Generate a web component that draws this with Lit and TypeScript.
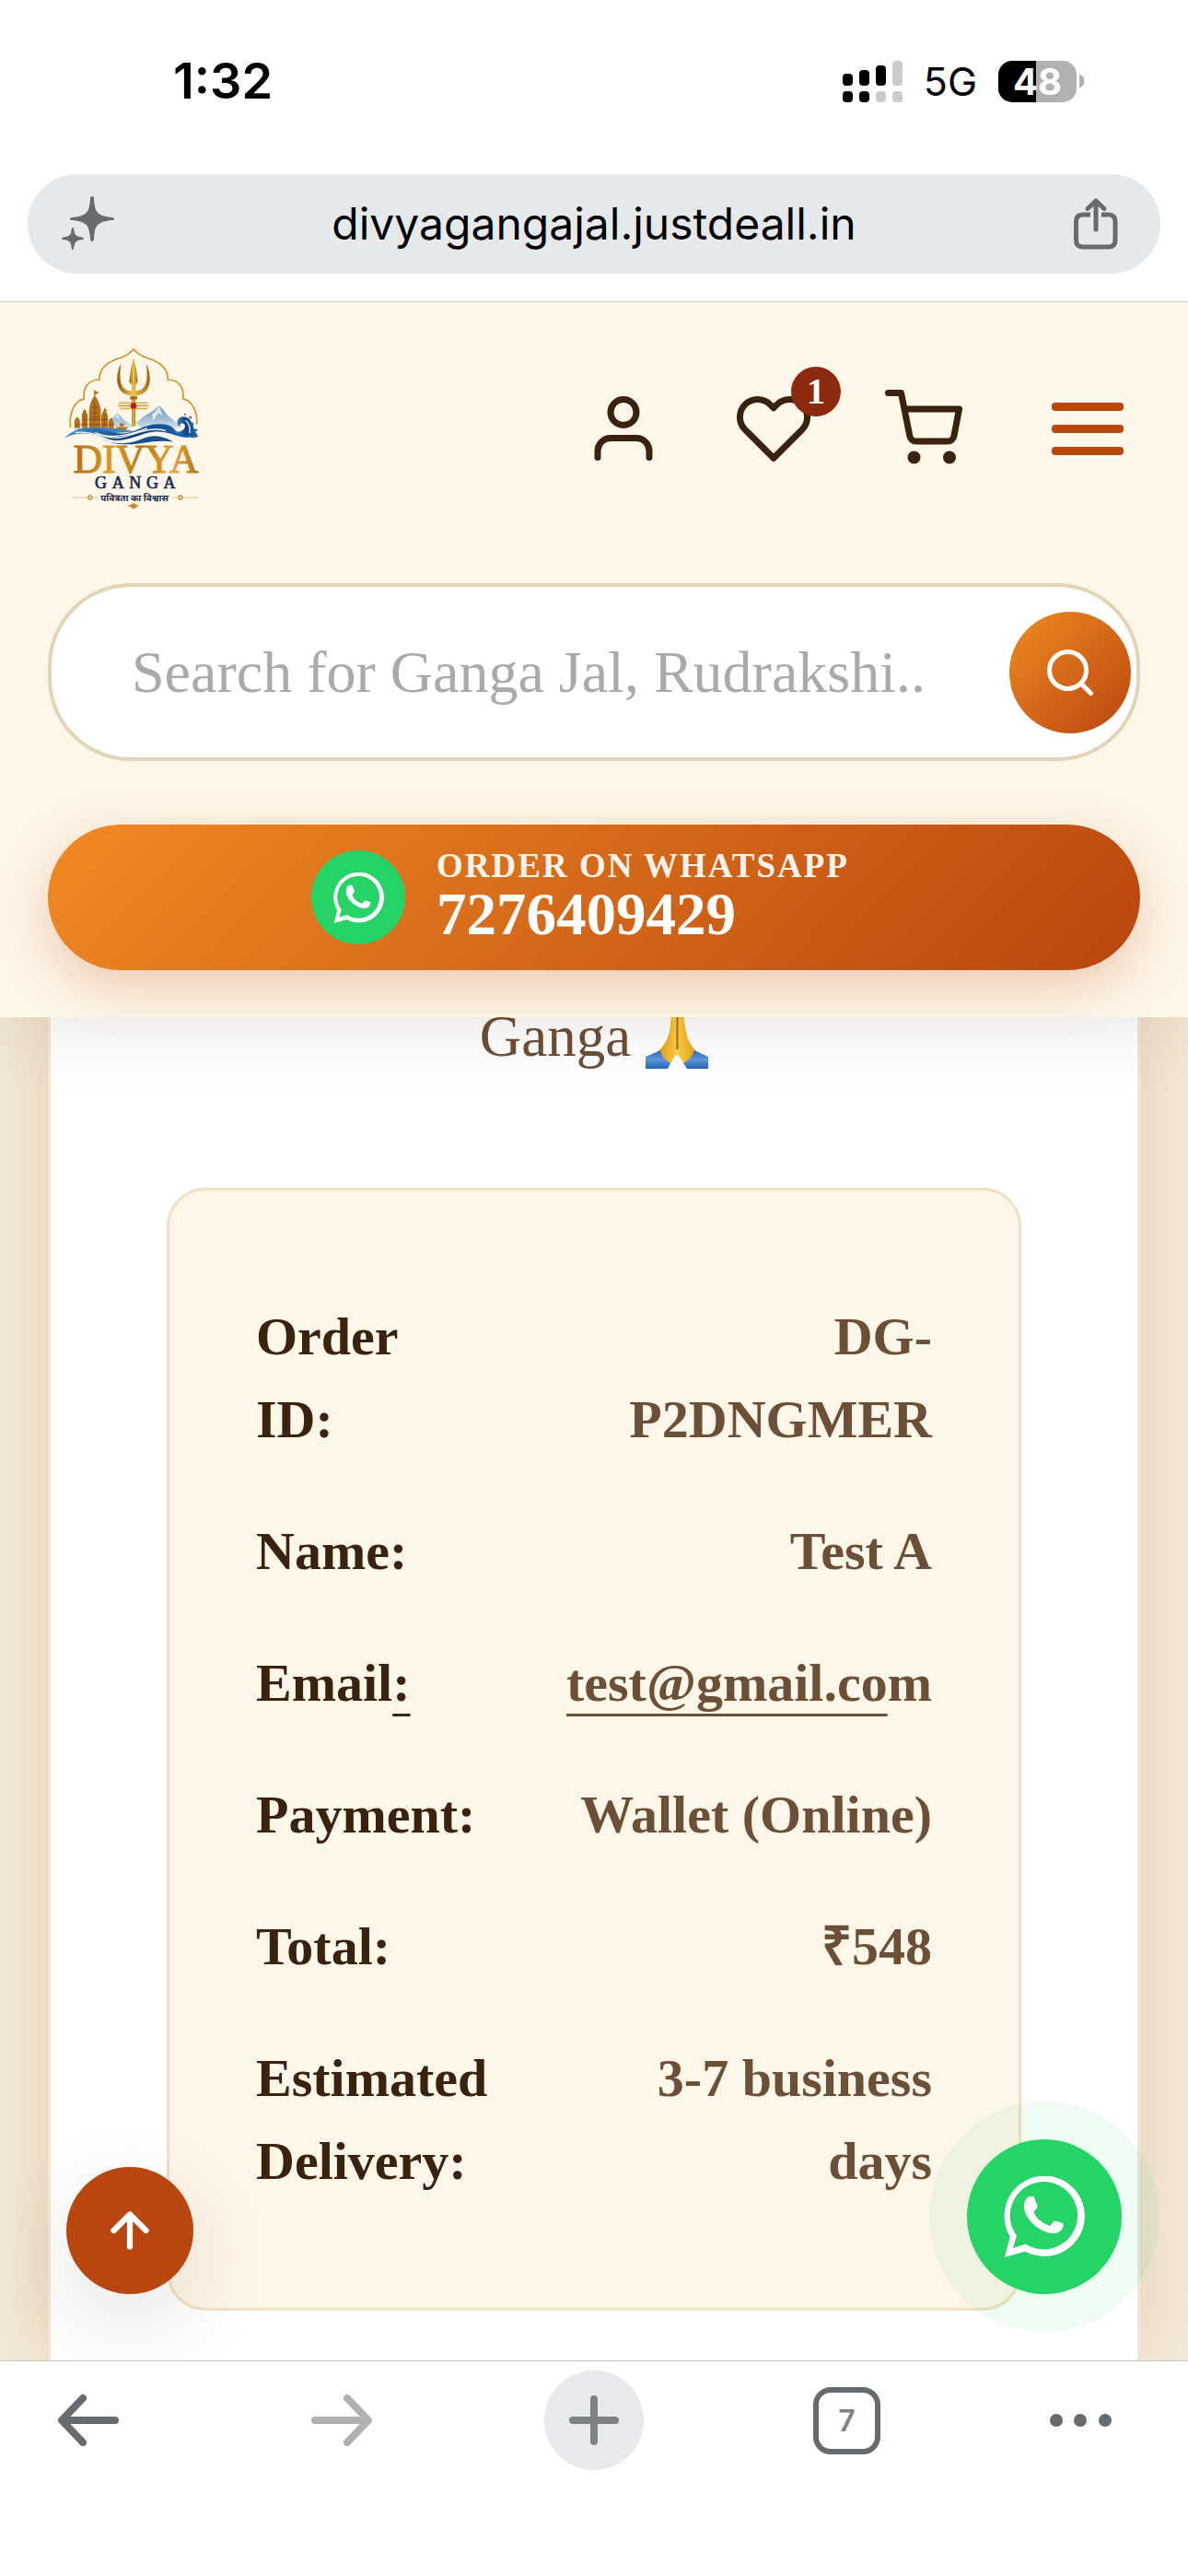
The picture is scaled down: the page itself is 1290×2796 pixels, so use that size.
import { LitElement, html, css, svg, nothing } from "lit";
import { customElement, property } from "lit/decorators.js";

const whatsappGlyph = svg`
  <path fill="#fff" fill-rule="evenodd" d="M20 197A131 131 0 1 1 70 245L3 264ZM42 194L30 234L71 221A110 110 0 1 0 42 194Z"/>
  <path fill="#fff" d="M66 98C66 82 73 66 86 66L95 66Q98 67 99 70L109 95Q110 99 109 102L98 116Q104 144 150 162L163 147Q166 144 171 146L191 153Q194 155 194 158C193 176 178 186 162 186C120 186 66 140 66 98Z"/>`;

@customElement("phone-status")
class PhoneStatus extends LitElement {
  static styles = css`
    :host { display: flex; align-items: center; gap: 23px; padding: 56px 113px 0 188px; height: 64px; color: #000; font-family: Inter, "Liberation Sans", sans-serif; }
    .time { margin-right: auto; font-size: 54px; line-height: 64px; font-weight: 600; }
    .network { font-size: 43px; line-height: 64px; }
    .signal { display: block; width: 65px; height: 45px; }
    .battery { display: flex; align-items: center; gap: 3px; }
    .cell { display: flex; align-items: center; justify-content: center; width: 85px; height: 45px; border-radius: 15px; background: linear-gradient(90deg, #000 48%, #b1b1b1 48%); color: #fff; font-size: 40px; line-height: 45px; font-weight: 700; }
    .nub { width: 5px; height: 14px; border-radius: 0 7px 7px 0; background: #b1b1b1; }
  `;
  render() {
    return html`
      <span class="time">1:32</span>
      <svg class="signal" viewBox="0 0 65 45" aria-hidden="true">
        <g fill="#000">
          <rect y="14" width="11" height="13" rx="4"/><rect x="18" y="10" width="11" height="17" rx="4"/><rect x="36" y="5" width="11" height="22" rx="4"/>
          <rect y="33" width="11" height="12" rx="4"/><rect x="18" y="33" width="11" height="12" rx="4"/>
        </g>
        <g fill="#cbcbcb">
          <rect x="54" width="11" height="27" rx="4"/><rect x="36" y="33" width="11" height="12" rx="4"/><rect x="54" y="33" width="11" height="12" rx="4"/>
        </g>
      </svg>
      <span class="network">5G</span>
      <span class="battery"><span class="cell">48</span><span class="nub"></span></span>
    `;
  }
}

@customElement("address-bar")
class AddressBar extends LitElement {
  static styles = css`
    :host { display: block; position: relative; z-index: 3; padding: 69px 30px 30px; border-bottom: 1px solid #cbc6cb; background: #fff; }
    .bar { display: flex; align-items: center; justify-content: space-between; height: 108px; padding: 0 32px; border-radius: 54px; background: #e6e9ec; }
    .tool { display: flex; align-items: center; justify-content: center; width: 68px; height: 68px; padding: 0; border: 0; background: none; }
    .tool svg { display: block; width: 68px; height: 68px; }
    .url { font-family: Inter, "Liberation Sans", sans-serif; font-size: 48px; line-height: 60px; color: #000; text-decoration: none; }
  `;
  render() {
    return html`
      <div class="bar">
        <button class="tool" aria-label="Assistant">
          <svg viewBox="0 0 68 68" fill="#666b6f">
            <path d="M38 4Q40 4 40 7C41 21 43 25 59 27Q62 27 62 28.500Q62 30 59 30C43 32 41 36 40 50Q40 53 38 53Q36 53 36 50C35 36 33 32 17 30Q14 30 14 28.500Q14 27 17 27C33 25 35 21 36 7Q36 4 38 4Z"/>
            <path d="M17 38Q18 38 18.300 40C19 46 20 47.500 27 48.500Q29 49 29 50Q29 51 27 51.200C20 52 19 54 18.300 60Q18 62 17 62Q16 62 15.700 60C15 54 14 52 7 51.200Q5 51 5 50Q5 49 7 48.500C14 47.500 15 46 15.700 40Q16 38 17 38Z"/>
          </svg>
        </button>
        <a class="url" href="https://divyagangajal.justdeall.in">divyagangajal.justdeall.in</a>
        <button class="tool" aria-label="Share">
          <svg viewBox="4 0 68 68" fill="none" stroke="#666b6f" stroke-width="5">
            <path d="M28 24H20Q12.500 24 12.500 31.500V51.500Q12.500 59 20 59H47.500Q55 59 55 51.500V31.500Q55 24 47.500 24H40"/>
            <path d="M34 40V9M25 17.500L34 9L43 17.500" stroke-linecap="round" stroke-linejoin="round"/>
          </svg>
        </button>
      </div>
    `;
  }
}

@customElement("brand-logo")
class BrandLogo extends LitElement {
  static styles = css`
    :host { display: block; }
    svg { display: block; width: 150px; height: 178px; }
    .name { font-family: "Liberation Serif", serif; font-size: 131px; }
    .sub { font-family: "Liberation Serif", serif; font-size: 54px; letter-spacing: 17px; }
    .tag { font-family: "Noto Sans Devanagari", "Noto Sans", sans-serif; font-size: 30px; font-weight: 700; }
  `;
  render() {
    return html`
      <svg viewBox="60 45 450 535" role="img" aria-label="Divya Ganga">
        <defs>
          <linearGradient id="gold" x1="0" x2="1"><stop offset="0" stop-color="#b06f12"/><stop offset=".3" stop-color="#d99a2b"/><stop offset=".55" stop-color="#b9780f"/><stop offset=".8" stop-color="#dfa63a"/><stop offset="1" stop-color="#b5740f"/></linearGradient>
          <linearGradient id="metal" x1="0" x2="1"><stop offset="0" stop-color="#8d5c0a"/><stop offset=".5" stop-color="#f1c450"/><stop offset="1" stop-color="#9a660d"/></linearGradient>
          <linearGradient id="peak" x1="0" y1="0" x2="0" y2="1"><stop offset="0" stop-color="#5a8fc0"/><stop offset="1" stop-color="#dfe9ee"/></linearGradient>
          <linearGradient id="water" x1="0" x2="1"><stop offset="0" stop-color="#4596cf"/><stop offset=".5" stop-color="#0d3f80"/><stop offset="1" stop-color="#1d6fb4"/></linearGradient>
        </defs>
        <path d="M79 310C74 262 92 222 124 216C118 180 138 153 173 154C172 112 205 94 243 82Q270 72 285 54Q300 72 327 82C366 94 398 112 397 154C432 153 452 180 446 216C478 222 495 262 491 300" fill="none" stroke="#cf9428" stroke-width="5"/>
        <path d="M190 308L215 280L232 262L250 280L285 308ZM290 296L325 268L345 258L370 238L395 268L420 290L440 308L330 320Z" fill="url(#peak)"/>
        <path d="M232 262L240 284L228 276L218 288ZM370 238L380 272L366 262L350 286L345 268Z" fill="#fff" opacity=".7"/>
        <g fill="#b0721f">
          <path d="M140 312V250Q145 220 158 205Q172 220 178 250V312Z"/>
          <path d="M116 312V268Q120 255 125 249Q132 256 135 270V312ZM180 312V270Q185 256 191 249Q198 258 201 272V312ZM92 312V288Q97 278 102 275Q108 280 110 290V312ZM203 312V290Q208 280 213 277Q219 284 221 296V312Z"/>
          <path d="M156 188H160V212H156ZM160 190L173 196L160 202ZM189 246H192V260H189ZM192 248L200 253L192 256Z"/>
        </g>
        <path d="M96 300H218M120 284H204M146 262H172M148 244H168M145 276H174M125 262V300M158 220V290M190 266V300" stroke="#6f4010" stroke-width="3" fill="none" opacity=".6"/>
        <path d="M226 308H268L260 318H234ZM240 296H254V306H240Z" fill="#b0721f"/>
        <path d="M92 316Q150 306 200 310T290 322L200 330Z" fill="#3f84ba"/>
        <path d="M280 205H291V305H280Z" fill="url(#metal)"/>
        <path d="M285 80Q296 118 299 160L291 172V204H280V172L271 160Q275 118 285 80Z" fill="url(#metal)"/>
        <path d="M244 100C224 140 222 206 285 206C348 206 346 140 326 100C332 150 330 186 297 190H273C240 186 238 150 244 100Z" fill="url(#metal)"/>
        <path d="M274 208H297V218H274Z" fill="#a66f12"/>
        <path d="M238 228H332V230H238ZM236 237H334V240H236ZM242 247H330V249H242Z" fill="#d79f30" stroke="#d79f30" stroke-width="2"/>
        <circle cx="285" cy="239" r="10" fill="#c01818"/>
        <path d="M60 344C100 300 160 310 220 326S310 296 370 298S410 326 440 326Q470 320 497 338Q488 346 470 342C430 346 400 318 350 324S250 366 200 346S100 322 60 344Z" fill="url(#water)"/>
        <path d="M95 326C150 318 190 348 240 342S330 304 390 320M160 326C220 352 280 330 330 312" fill="none" stroke="#eaf4f8" stroke-width="4"/>
        <path d="M170 338C210 368 270 366 310 348S380 336 414 356C380 352 350 354 318 360S210 372 170 338Z" fill="#14508f"/>
        <path d="M420 322C450 330 462 300 446 296C438 294 434 302 438 307C424 304 424 278 442 275C470 270 478 300 484 318L494 336L440 334Z" fill="url(#water)"/>
        <path d="M455 286Q472 300 468 328" stroke="#eaf4f8" stroke-width="4" fill="none"/>
        <circle cx="453" cy="267" r="3" fill="#1d6fb4"/><circle cx="471" cy="277" r="4" fill="#1d6fb4"/><ellipse cx="477" cy="299" rx="4" ry="7" fill="#1d6fb4"/><ellipse cx="488" cy="318" rx="6" ry="4" fill="#1d6fb4"/>
        <text class="name" x="293" y="456" text-anchor="middle" fill="url(#gold)" stroke="url(#gold)" stroke-width="3">DIVYA</text>
        <text class="sub" x="299" y="508" text-anchor="middle" fill="#17284f" stroke="#17284f" stroke-width="2">GANGA</text>
        <text class="tag" x="288" y="549" text-anchor="middle" fill="#17284f">पवित्रता का विश्वास</text>
        <path d="M84 538H134M152 538H168M408 538H430M446 538H498" stroke="#d9a860" stroke-width="2"/>
        <circle cx="143" cy="538" r="6" fill="none" stroke="#c8892f" stroke-width="4"/><circle cx="438" cy="538" r="6" fill="none" stroke="#c8892f" stroke-width="4"/>
        <path d="M266 564Q276 562 285 556Q294 562 302 564Q294 568 285 576Q276 568 266 564Z" fill="#c8892f"/>
      </svg>
    `;
  }
}

@customElement("shop-header")
class ShopHeader extends LitElement {
  static styles = css`
    :host { display: flex; flex-direction: column; position: relative; z-index: 2; padding: 48px 52px 51px; background: #fef6e9; box-shadow: 0 12px 72px rgba(60, 36, 16, 0.1); }
    .top { display: flex; align-items: center; gap: 79px; margin-bottom: 79px; }
    .brand { margin-right: auto; padding: 0 18px; }
    .icon { display: flex; position: relative; padding: 0; border: 0; background: none; }
    .icon svg { display: block; width: 84px; height: 84px; }
    .badge { position: absolute; top: -25px; right: -31px; width: 54px; height: 54px; border-radius: 50%; background: #8b2a0e; color: #fff; font: 700 40px/54px "Liberation Serif", serif; text-align: center; }
    .menu { display: flex; flex-direction: column; gap: 15px; padding: 18px; border: 0; background: none; }
    .line { width: 78px; height: 9px; border-radius: 4px; background: #b8460e; }
    .search { display: flex; align-items: center; box-sizing: border-box; height: 193px; margin-bottom: 69px; padding-right: 6px; border: 4px solid #e3d3b7; border-radius: 90px; background: #fff; }
    .field { flex: 1; min-width: 0; box-sizing: border-box; height: 120px; margin: 0 95px 0 87px; padding: 0; border: 0; outline: 0; background: none; color: #3a2210; font: 64px/76px "Liberation Serif", serif; }
    .field::placeholder { color: #aaa; opacity: 1; }
    .go { display: flex; align-items: center; justify-content: center; width: 132px; height: 132px; padding: 0; border: 0; border-radius: 50%; background: linear-gradient(135deg, #f08a24, #b8460e); }
    .go svg { display: block; width: 60px; height: 60px; }
    .order { display: flex; align-items: center; justify-content: center; gap: 34px; padding: 27px 30px 27px 0; border-radius: 79px; background: linear-gradient(135deg, #f08a24, #b8460e); box-shadow: 0 18px 54px rgba(184, 70, 14, 0.25); color: #fff; text-decoration: none; }
    .disc { display: flex; align-items: center; justify-content: center; width: 102px; height: 102px; border-radius: 50%; background: #25d366; }
    .disc svg { display: block; width: 55px; height: 55px; }
    .words { display: flex; flex-direction: column; font-weight: 700; }
    .label { font-size: 37px; line-height: 36px; letter-spacing: 2px; color: #fff4ec; }
    .number { font-size: 65px; line-height: 68px; }
  `;
  render() {
    return html`
      <div class="top">
        <a class="brand" href="#"><brand-logo></brand-logo></a>
        <button class="icon" aria-label="Account">
          <svg viewBox="0 0 24 24" fill="none" stroke="#3a2210" stroke-width="2" stroke-linecap="round" stroke-linejoin="round"><path d="M20 21v-2a4 4 0 0 0-4-4H8a4 4 0 0 0-4 4v2"/><circle cx="12" cy="7" r="4"/></svg>
        </button>
        <button class="icon" aria-label="Wishlist">
          <svg viewBox="0 0 24 24" fill="none" stroke="#3a2210" stroke-width="2" stroke-linecap="round" stroke-linejoin="round"><path d="M20.840 4.610a5.500 5.500 0 0 0-7.780 0L12 5.670l-1.060-1.060a5.500 5.500 0 0 0-7.780 7.780l1.060 1.060L12 21.230l7.780-7.780 1.060-1.060a5.500 5.500 0 0 0 0-7.780z"/></svg>
          <span class="badge">1</span>
        </button>
        <button class="icon" aria-label="Cart">
          <svg viewBox="0 0 24 24" fill="none" stroke="#3a2210" stroke-width="2" stroke-linecap="round" stroke-linejoin="round"><circle cx="9" cy="21" r="1"/><circle cx="20" cy="21" r="1"/><path d="M1 1h4l2.680 13.390a2 2 0 0 0 2 1.610h9.720a2 2 0 0 0 2-1.610L23 6H6"/></svg>
        </button>
        <button class="menu" aria-label="Menu"><span class="line"></span><span class="line"></span><span class="line"></span></button>
      </div>
      <form class="search" role="search" @submit=${(e: Event) => e.preventDefault()}>
        <input class="field" type="text" aria-label="Search products" placeholder="Search for Ganga Jal, Rudrakshi..." />
        <button class="go" aria-label="Search">
          <svg viewBox="0 0 24 24" fill="none" stroke="#fff" stroke-width="2" stroke-linecap="round"><circle cx="11" cy="11" r="8"/><path d="M21 21l-4.350-4.350"/></svg>
        </button>
      </form>
      <a class="order" href="https://wa.me/7276409429">
        <span class="disc"><svg viewBox="0 0 264 264" aria-hidden="true">${whatsappGlyph}</svg></span>
        <span class="words"><span class="label">ORDER ON WHATSAPP</span><span class="number">7276409429</span></span>
      </a>
    `;
  }
}

interface OrderRow { label: string; value: string; linked?: number; }

@customElement("order-summary")
class OrderSummary extends LitElement {
  @property({ attribute: false }) rows: OrderRow[] = [];
  static styles = css`
    :host { display: block; }
    .box { display: flex; flex-direction: column; gap: 53px; margin: 0; padding: 114px 94px; border: 3px solid #f3e0c4; border-radius: 42px; background: #fef6e9; font: 700 58px/90px "Liberation Serif", serif; }
    .row { display: flex; justify-content: space-between; }
    .label { width: min-content; color: #3a2210; }
    .value { max-width: 55%; margin: 0; color: #6b4f36; text-align: right; }
    .mark { text-decoration: underline; text-decoration-thickness: 3px; text-underline-offset: 14px; text-decoration-skip-ink: none; }
  `;
  render() {
    return html`
      <dl class="box">
        ${this.rows.map((r) => {
          const n = r.linked ?? 0;
          return html`<div class="row">
            <dt class="label">${n ? html`${r.label}<span class="mark">:</span>` : `${r.label}:`}</dt>
            <dd class="value">${n ? html`<span class="mark">${r.value.slice(0, n)}</span>` : nothing}${r.value.slice(n)}</dd>
          </div>`;
        })}
      </dl>
    `;
  }
}

@customElement("browser-toolbar")
class BrowserToolbar extends LitElement {
  static styles = css`
    :host { display: flex; justify-content: space-between; position: relative; z-index: 2; padding: 10px 42px 115px; border-top: 1px solid #c4c5c6; background: #fff; }
    .key { display: flex; align-items: center; justify-content: center; width: 108px; height: 108px; padding: 0; border: 0; border-radius: 50%; background: none; }
    .key svg { display: block; width: 68px; height: 68px; }
    .add { background: #e8e9ed; }
    .more { justify-content: flex-start; }
    .count { box-sizing: border-box; width: 73px; height: 73px; border: 6px solid #666b6f; border-radius: 19px; color: #7d8285; font: 600 32px/61px Inter, "Liberation Sans", sans-serif; text-align: center; }
  `;
  render() {
    return html`
      <button class="key" aria-label="Back"><svg viewBox="0 0 68 68" fill="none" stroke="#666b6f" stroke-width="8" stroke-linecap="round" stroke-linejoin="round"><path d="M63 34H6M28 10L5 34L28 58"/></svg></button>
      <button class="key" aria-label="Forward"><svg viewBox="0 0 68 68" fill="none" stroke="#b1b1b1" stroke-width="8" stroke-linecap="round" stroke-linejoin="round"><path d="M5 34H62M40 10L63 34L40 58"/></svg></button>
      <button class="key add" aria-label="New tab"><svg viewBox="0 0 68 68" fill="none" stroke="#7d8285" stroke-width="8" stroke-linecap="round"><path d="M34 11V57M11 34H57"/></svg></button>
      <button class="key" aria-label="Tabs"><span class="count">7</span></button>
      <button class="key more" aria-label="More"><svg viewBox="0 0 68 68" fill="#666b6f"><circle cx="7" cy="34" r="7"/><circle cx="33" cy="34" r="7"/><circle cx="60" cy="34" r="7"/></svg></button>
    `;
  }
}

@customElement("app-root")
class AppRoot extends LitElement {
  static styles = css`
    :host { display: flex; flex-direction: column; min-height: 100vh; background: #fff; font-family: "Liberation Serif", serif; }
    .page { display: flex; flex: 1; flex-direction: column; position: relative; overflow: hidden; padding: 0 52px; background: #f5ecdb; }
    .card { flex: 1; margin-top: -31px; padding: 0 126px 53px; border: 3px solid #f3e6d3; border-width: 0 3px; background: #fff; box-shadow: 0 0 90px rgba(160, 80, 19, 0.2); }
    .thanks { display: flex; align-items: center; justify-content: center; gap: 16px; margin: 0 0 111px; color: #6b4f36; font-size: 63px; line-height: 105px; }
    .pray { display: block; width: 68px; height: 68px; }
    .float { display: flex; align-items: center; justify-content: center; position: absolute; bottom: 72px; padding: 0; border: 0; border-radius: 50%; }
    .up { left: 72px; width: 138px; height: 138px; background: #b8460e; box-shadow: 0 30px 90px rgba(60, 36, 16, 0.12); }
    .up svg { display: block; width: 60px; height: 60px; }
    .chat { right: 72px; width: 168px; height: 168px; background: #25d366; box-shadow: 0 0 0 41px rgba(37, 211, 102, 0.08); }
    .chat svg { display: block; width: 88px; height: 88px; }
  `;
  private rows: OrderRow[] = [
    { label: "Order ID", value: "DG-P2DNGMER" },
    { label: "Name", value: "Test A" },
    { label: "Email", value: "test@gmail.com", linked: 13 },
    { label: "Payment", value: "Wallet (Online)" },
    { label: "Total", value: "₹548" },
    { label: "Estimated Delivery", value: "3-7 business days" },
  ];
  render() {
    return html`
      <phone-status></phone-status>
      <address-bar></address-bar>
      <shop-header></shop-header>
      <main class="page">
        <section class="card">
          <p class="thanks">Ganga
            <svg class="pray" viewBox="0 0 68 68" role="img" aria-label="Folded hands">
              <defs>
                <linearGradient id="skin" x1="0" x2="1"><stop offset="0" stop-color="#e09a10"/><stop offset=".5" stop-color="#ffd04a"/><stop offset="1" stop-color="#e8a010"/></linearGradient>
                <linearGradient id="cuff" x1="0" y1="0" x2="0" y2="1"><stop offset="0" stop-color="#2b68b2"/><stop offset=".5" stop-color="#5a9ae2"/><stop offset="1" stop-color="#2a66ae"/></linearGradient>
              </defs>
              <path d="M34 0Q29 1 28 10L26 28Q22 42 14 49L26 64L32 54Q34 51 36 54L43 64L55 49Q47 42 44 28L41 10Q39 1 34 0Z" fill="url(#skin)"/>
              <path d="M34.500 2V47" stroke="#b06c08" stroke-width="2"/>
              <path d="M0 55L16 48Q17 56 27 62L24 68H0ZM68 55L53 48Q51 56 41 62L45 68H68Z" fill="url(#cuff)"/>
            </svg>
          </p>
          <order-summary .rows=${this.rows}></order-summary>
        </section>
        <button class="float up" aria-label="Back to top">
          <svg viewBox="0 0 24 24" fill="none" stroke="#fff" stroke-width="2.500" stroke-linecap="round" stroke-linejoin="round"><path d="M12 19V5M5 12l7-7 7 7"/></svg>
        </button>
        <button class="float chat" aria-label="Chat on WhatsApp"><svg viewBox="0 0 264 264">${whatsappGlyph}</svg></button>
      </main>
      <browser-toolbar></browser-toolbar>
    `;
  }
}
